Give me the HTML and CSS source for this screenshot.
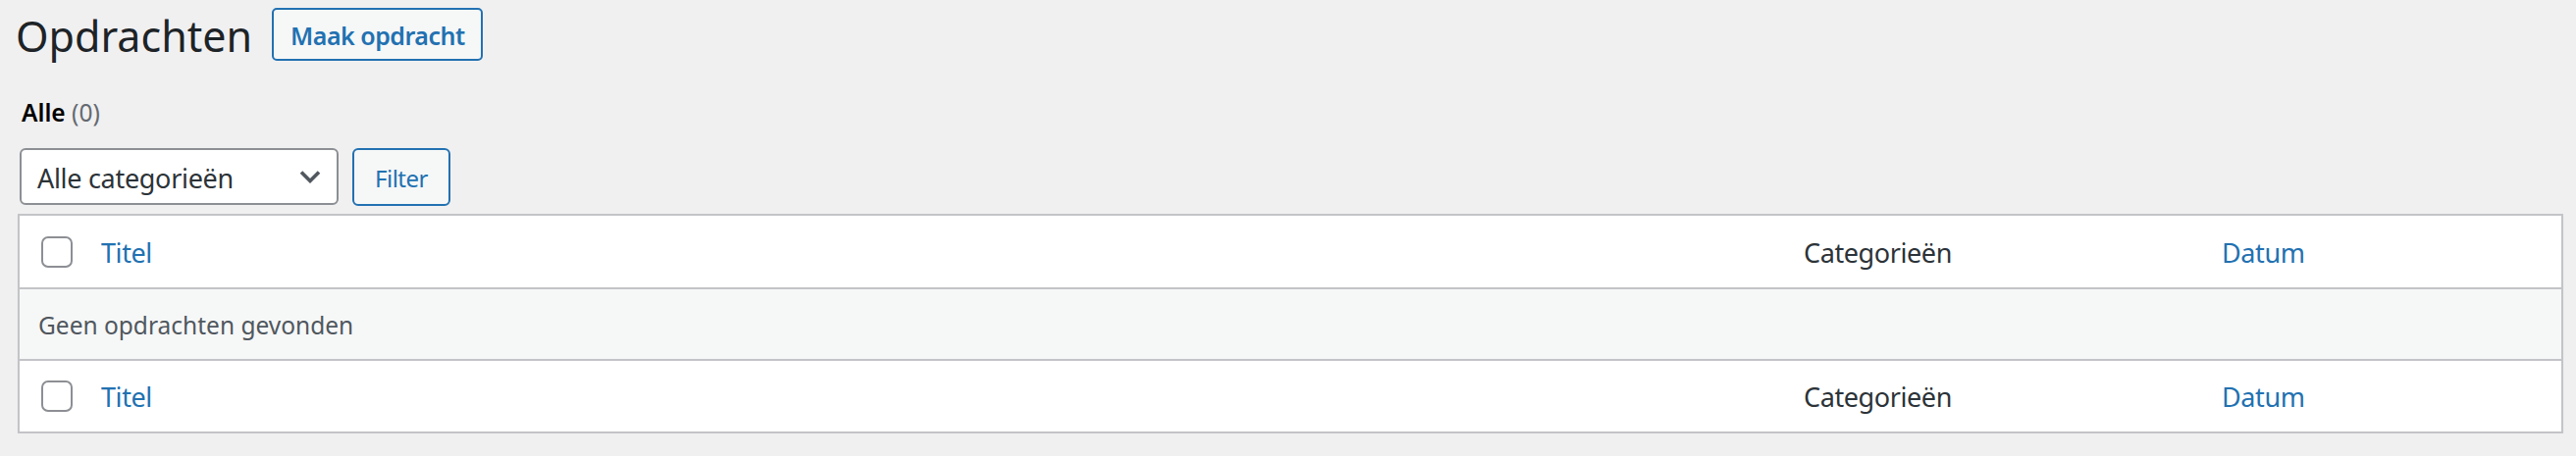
FILE: index.html
```html
<!DOCTYPE html>
<html lang="nl">
<head>
<meta charset="utf-8">
<title>Opdrachten</title>
<link rel="stylesheet" href="styles.css">
</head>
<body>
<div class="wrap">
  <div class="page-head">
    <h1 class="page-title">Opdrachten</h1>
    <a class="title-action" href="#">Maak opdracht</a>
  </div>
  <ul class="subsubsub">
    <li><a class="current" href="#">Alle <span class="count">(0)</span></a></li>
  </ul>
  <div class="tablenav">
    <div class="select-box">
      <span class="select-label">Alle categorieën</span>
      <svg class="chevron" width="22" height="13" viewBox="0 0 22 13" aria-hidden="true"><polyline points="2,1.5 11,10.5 20,1.5" fill="none" stroke="#50575e" stroke-width="3.6"/></svg>
    </div>
    <button class="button" type="button">Filter</button>
  </div>
  <table class="list-table">
    <colgroup>
      <col class="c-check">
      <col class="c-title">
      <col class="c-cat">
      <col class="c-date">
    </colgroup>
    <thead>
      <tr>
        <td class="check-col"><span class="checkbox"></span></td>
        <th class="col-title"><a href="#">Titel</a></th>
        <th class="col-cat">Categorieën</th>
        <th class="col-date"><a href="#">Datum</a></th>
      </tr>
    </thead>
    <tbody>
      <tr class="no-items">
        <td colspan="4">Geen opdrachten gevonden</td>
      </tr>
    </tbody>
    <tfoot>
      <tr>
        <td class="check-col"><span class="checkbox"></span></td>
        <th class="col-title"><a href="#">Titel</a></th>
        <th class="col-cat">Categorieën</th>
        <th class="col-date"><a href="#">Datum</a></th>
      </tr>
    </tfoot>
  </table>
</div>
</body>
</html>
```
FILE: styles.css
```css
* {
  box-sizing: border-box;
}

body {
  margin: 0;
  background: #f0f0f1;
  font-family: "Noto Sans", "Segoe UI", sans-serif;
  color: #3c434a;
}

.wrap {
  padding: 0 13px 0 18px;
}

.page-head {
  display: flex;
  align-items: flex-start;
  padding-top: 8px;
}

.page-title {
  margin: 1px 0 0 -2px;
  font-size: 43px;
  font-weight: 400;
  line-height: 56px;
  color: #1d2327;
}

.title-action {
  margin-left: 20px;
  height: 54px;
  padding: 3px 16px 0 17px;
  border: 2px solid #2271b1;
  border-radius: 5px;
  background: #f6f7f7;
  color: #2271b1;
  font-size: 25px;
  font-weight: 600;
  letter-spacing: -0.5px;
  line-height: 47px;
  text-decoration: none;
  white-space: nowrap;
}

.subsubsub {
  list-style: none;
  margin: 34px 0 0 4px;
  padding: 0;
  font-size: 24.5px;
  line-height: 32px;
  color: #646970;
}

.subsubsub .current {
  color: #000;
  font-weight: 600;
  text-decoration: none;
}

.subsubsub .count {
  font-weight: 400;
  color: #646970;
}

.tablenav {
  display: flex;
  align-items: flex-start;
  gap: 14px;
  margin: 20px 0 8px 2px;
}

.select-box {
  display: flex;
  align-items: center;
  justify-content: space-between;
  width: 325px;
  height: 58px;
  padding: 3px 16px 0 16px;
  border: 2px solid #8c8f94;
  border-radius: 6px;
  background: #fff;
  font-size: 27px;
  letter-spacing: -0.3px;
  color: #2c3338;
}

.chevron {
  display: block;
  margin-top: -2px;
}

.button {
  width: 100px;
  height: 59px;
  padding: 2px 0 0;
  border: 2px solid #2271b1;
  border-radius: 6px;
  background: #f6f7f7;
  color: #2271b1;
  font-family: inherit;
  font-size: 24px;
  letter-spacing: -0.5px;
}

.list-table {
  width: 100%;
  table-layout: fixed;
  border: 2px solid #c3c4c7;
  border-spacing: 0;
  background: #fff;
  box-shadow: 0 2px 2px rgba(0, 0, 0, 0.04);
}

.c-check {
  width: 73px;
}

.c-cat {
  width: 426px;
}

.c-date {
  width: 354px;
}

.list-table th,
.list-table td {
  padding: 0;
  vertical-align: middle;
  text-align: left;
  font-weight: 400;
}

.list-table thead th,
.list-table thead td {
  height: 75px;
  border-bottom: 2px solid #c3c4c7;
}

.list-table tfoot th,
.list-table tfoot td {
  height: 74px;
  border-top: 2px solid #c3c4c7;
}

.list-table th {
  font-size: 27px;
  letter-spacing: -0.4px;
  color: #2c3338;
  white-space: nowrap;
}

.list-table thead th {
  padding-top: 2px;
}

.list-table th a {
  color: #2271b1;
  text-decoration: none;
}

.check-col {
  padding-left: 22px !important;
}

.checkbox {
  display: block;
  width: 32px;
  height: 32px;
  border: 2px solid #8c8f94;
  border-radius: 7px;
  background: #fff;
}

.col-title {
  padding-left: 10px !important;
}

.col-cat,
.col-date {
  padding-left: 8px !important;
}

.no-items td {
  height: 71px;
  padding: 2px 0 0 19px;
  background: #f6f7f7;
  color: #50575e;
  font-size: 24.5px;
}
```
